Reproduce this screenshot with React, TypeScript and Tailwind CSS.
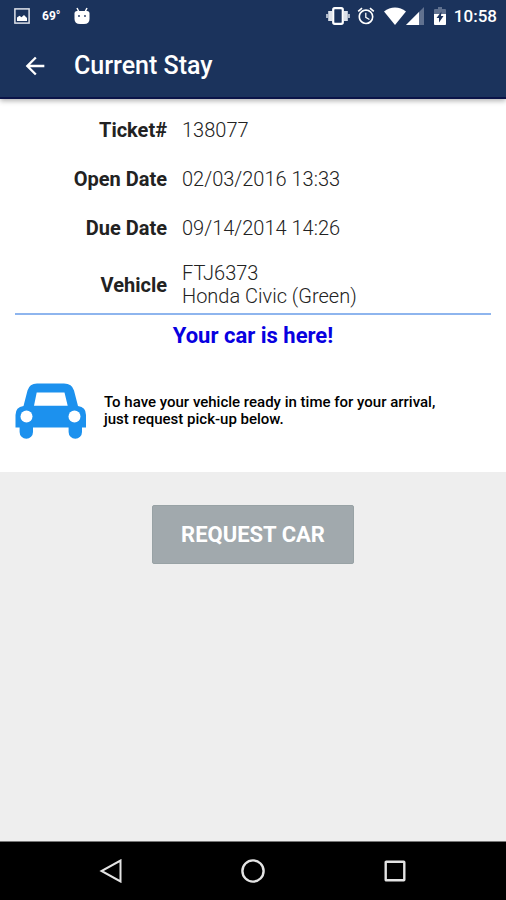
import { MdAlarm, MdArrowBack } from "react-icons/md";

const stay = [
  { label: "Ticket#", lines: ["138077"] },
  { label: "Open Date", lines: ["02/03/2016 13:33"] },
  { label: "Due Date", lines: ["09/14/2014 14:26"] },
  { label: "Vehicle", lines: ["FTJ6373", "Honda Civic (Green)"] },
];

const PictureIcon = () => (
  <svg className="w-4 h-4" viewBox="0 0 16 16" fill="none">
    <rect x="0.9" y="0.9" width="14.2" height="14.2" stroke="#dde2ea" strokeWidth="1.5" />
    <path d="M3 13V9.5l2.5-1.7 2 1.5L10 7l3 3v3z" fill="#fff" />
  </svg>
);

const RobotIcon = () => (
  <svg className="w-4 h-[18px]" viewBox="0 0 16 18">
    <path d="M3 1l2 4M13 1l-2 4" stroke="#fff" strokeWidth="1.5" />
    <path d="M.5 6.5Q.5 4 3 4h10q2.5 0 2.5 2.5V12q0 5-5.5 5H6Q.5 17 .5 12z" fill="#fff" />
    <circle cx="5" cy="9" r="0.9" fill="#1b315b" />
    <circle cx="11" cy="9" r="0.9" fill="#1b315b" />
  </svg>
);

const VibrateIcon = () => (
  <svg className="w-6 h-[18px]" viewBox="0 0 24 18" fill="none">
    <path d="M1 7v4M23 7v4" stroke="#dde2ea" strokeWidth="1.5" />
    <path d="M4.2 4v10M19.8 4v10" stroke="#dde2ea" strokeWidth="4" />
    <rect x="7.2" y="1.2" width="9.6" height="15.6" rx="1.5" fill="#1b335c" stroke="#fff" strokeWidth="2.2" />
  </svg>
);

const WifiIcon = () => (
  <svg className="w-[22px] h-[18px]" viewBox="0 0 22 18">
    <path d="M0 4.5Q5 .5 11 .5t11 4L11 18z" fill="#fff" />
  </svg>
);

const SignalIcon = () => (
  <svg className="w-[18px] h-[18px]" viewBox="0 0 18 18">
    <path d="M18 0v18H0z" fill="#60718f" />
    <path d="M13 5v13H0z" fill="#fff" />
  </svg>
);

const BatteryIcon = () => (
  <svg className="w-3 h-[18px]" viewBox="0 0 12 18">
    <path d="M4 0h4v2h3q1 0 1 1v14q0 1-1 1H1q-1 0-1-1V3q0-1 1-1h3z" fill="#60718f" />
    <path d="M0 7h12v10q0 1-1 1H1q-1 0-1-1z" fill="#fff" />
    <path d="M7.5 4.5L2.5 11H5v4.5L9.5 9H7z" fill="#1b315b" />
  </svg>
);

const CarIcon = () => (
  <svg className="w-[71px] h-14 shrink-0" viewBox="0 0 71 56" fill="#1c91ee">
    <path
      fillRule="evenodd"
      d="M22 .5h27q8 0 10 7l4 15.5q8 1 8 9v12.5h-4V49a6.7 6.7 0 0 1-13.4 0v-4.5H18V49a6.7 6.7 0 0 1-13.4 0v-4.5H.5V32q0-8 8-9l4-15.5q2-7 9.5-7zM21.7 9.5L19 22.7h33.7L49.5 9.5z"
    />
    <circle cx="11.5" cy="33.6" r="6" fill="#fff" />
    <circle cx="59.5" cy="33.6" r="6" fill="#fff" />
  </svg>
);

export default function App() {
  return (
    <div className="min-h-screen flex flex-col bg-[#eeeeee] font-['Roboto',sans-serif]">
      <header className="relative bg-[#1b335c] text-white border-b-2 border-[#0b1448] shadow-[0_2px_5px_rgba(0,0,0,0.3)]">
        <div className="flex items-center justify-between h-8 pl-[14px] pr-[9px]">
          <div className="flex items-center">
            <PictureIcon />
            <span className="ml-3 mr-3 w-5 text-xs font-bold">69°</span>
            <RobotIcon />
          </div>
          <div className="flex items-center">
            <VibrateIcon />
            <MdAlarm className="w-5 h-5 ml-1.5" />
            <span className="ml-2 flex">
              <WifiIcon />
              <SignalIcon />
            </span>
            <span className="ml-2.5 mr-2">
              <BatteryIcon />
            </span>
            <span className="text-[17px] leading-6 font-medium">10:58</span>
          </div>
        </div>
        <div className="flex items-center h-[65px] pl-[21px] pt-0.5">
          <button type="button" aria-label="Back">
            <MdArrowBack className="w-7 h-7" />
          </button>
          <h1 className="ml-[25px] text-[25px] font-medium">Current Stay</h1>
        </div>
      </header>

      <main className="flex-1">
        <section className="bg-white px-[15px] pb-[33px]">
          <dl className="flex flex-col gap-[18px] pt-4 pb-[5px] text-xl leading-[23px] border-b-2 border-[#8eb5ee]">
            {stay.map((item) => (
              <div key={item.label} className="flex items-center gap-[15px] min-h-[31px]">
                <dt className="w-[152px] text-right font-bold text-[#222222]">{item.label}</dt>
                <dd className="font-light text-[#222222]">
                  {item.lines.map((line) => (
                    <div key={line}>{line}</div>
                  ))}
                </dd>
              </div>
            ))}
          </dl>
          <p className="pt-[7px] text-center text-[22px] leading-7 font-bold text-[#0800e0]">
            Your car is here!
          </p>
          <div className="flex items-center gap-[18px] pt-[33px]">
            <CarIcon />
            <p className="text-[15px] leading-[17px] font-medium text-black">
              To have your vehicle ready in time for your arrival,
              <br />
              just request pick-up below.
            </p>
          </div>
        </section>
        <div className="flex justify-center py-[33px]">
          <button
            type="button"
            className="h-[59px] px-7 rounded-xs border border-[#98a2a5] bg-[#a1a9ad] text-[22px] font-bold text-white"
          >
            REQUEST CAR
          </button>
        </div>
      </main>

      <nav className="flex items-center justify-between h-[59px] px-[99px] bg-black border-t border-[#777777]">
        <button type="button" aria-label="Back">
          <svg className="w-6 h-6" viewBox="0 0 24 24" fill="none" stroke="#e4e4e4" strokeWidth="2">
            <path d="M21.5 1.5v21L2.5 12z" />
          </svg>
        </button>
        <button type="button" aria-label="Home">
          <svg className="w-6 h-6" viewBox="0 0 24 24" fill="none" stroke="#e4e4e4" strokeWidth="2.4">
            <circle cx="12" cy="12" r="10.6" />
          </svg>
        </button>
        <button type="button" aria-label="Recent apps">
          <svg className="w-6 h-6" viewBox="0 0 24 24" fill="none" stroke="#e4e4e4" strokeWidth="2.4">
            <rect x="2.7" y="2.7" width="18.6" height="18.6" rx="0.5" />
          </svg>
        </button>
      </nav>
    </div>
  );
}
